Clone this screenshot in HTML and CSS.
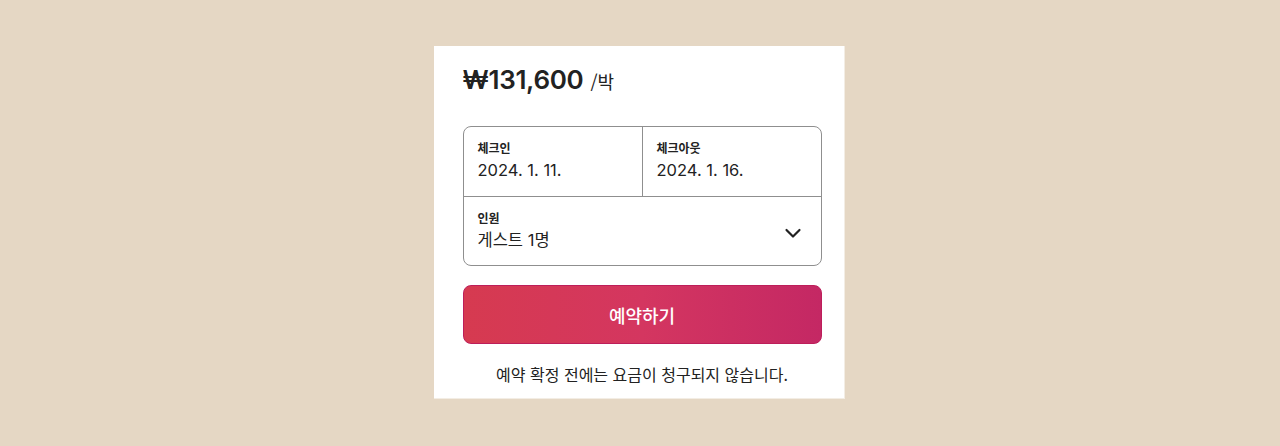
FILE: index.html
```html
<!DOCTYPE html>
<html lang="ko">
<head>
<meta charset="utf-8">
<title>예약</title>
<link rel="stylesheet" href="styles.css">
</head>
<body>
<div class="page">
  <div class="card">
    <div class="price">
      <span class="amount">₩131,600</span>
      <span class="unit">/박</span>
    </div>
    <div class="form">
      <div class="row dates">
        <div class="field">
          <div class="label">체크인</div>
          <div class="value">2024. 1. 11.</div>
        </div>
        <div class="field right">
          <div class="label">체크아웃</div>
          <div class="value">2024. 1. 16.</div>
        </div>
      </div>
      <div class="row guests">
        <div class="field">
          <div class="label">인원</div>
          <div class="value">게스트 1명</div>
        </div>
        <svg class="chev" width="18" height="18" viewBox="0 0 18 18" aria-hidden="true">
          <path d="M2.5 6 L9 12.5 L15.5 6" fill="none" stroke="#222" stroke-width="2.2" stroke-linecap="round" stroke-linejoin="round"/>
        </svg>
      </div>
    </div>
    <button class="reserve">예약하기</button>
    <p class="note">예약 확정 전에는 요금이 청구되지 않습니다.</p>
  </div>
</div>
</body>
</html>
```

FILE: styles.css
```css
* { box-sizing: border-box; }
html, body { margin: 0; padding: 0; }
body {
  background: #e5d7c4;
  font-family: Inter, "Noto Sans CJK KR", "Noto Sans", sans-serif;
  color: #222222;
  height: 446px;
}
.page {
  display: flex;
  justify-content: center;
  padding-top: 46px;
  padding-right: 2px;
}
.card {
  width: 411px;
  height: 353px;
  background: #ffffff;
  border-right: 1px solid #f3ede4;
  border-bottom: 1px solid #f3ede4;
  padding: 18px 22px 0 29px;
  display: flex;
  flex-direction: column;
}
.price {
  display: flex;
  align-items: baseline;
  gap: 7px;
  height: 34px;
}
.amount {
  font-size: 26px;
  font-weight: 600;
  letter-spacing: -0.3px;
  color: #222;
}
.unit {
  font-family: "Noto Sans CJK KR", sans-serif;
  font-size: 18px;
  font-weight: 400;
  color: #222;
}
.form {
  margin-top: 28px;
  border: 1px solid #8f8f8f;
  border-radius: 8px;
  display: flex;
  flex-direction: column;
}
.row { display: flex; height: 68px; }
.dates { border-bottom: 1px solid #8f8f8f; height: 70px; }
.dates .field { flex: 1; }
.field {
  padding: 12px 14px 0 14px;
}
.field.right { border-left: 1px solid #8f8f8f; }
.label {
  font-family: "Noto Sans CJK KR", sans-serif;
  font-size: 12px;
  font-weight: 700;
  line-height: 18px;
  color: #222;
}
.value {
  font-size: 16.5px;
  line-height: 24px;
  margin-top: 1px;
  color: #222;
  font-family: Inter, "Noto Sans CJK KR", sans-serif;
}
.guests { justify-content: space-between; align-items: center; }
.guests .field { align-self: stretch; }
.chev { margin-right: 19px; margin-top: 4px; }
.reserve {
  margin-top: 19px;
  height: 59px;
  width: 100%;
  border: 1px solid #bd1e5a;
  border-radius: 8px;
  background: linear-gradient(90deg, #d63a50 0%, #d43660 50%, #c42864 100%);
  color: #ffffff;
  font-family: "Noto Sans CJK KR", sans-serif;
  font-size: 18px;
  font-weight: 500;
  padding: 0;
}
.note {
  margin: 19px 0 0 0;
  text-align: center;
  font-family: "Noto Sans CJK KR", sans-serif;
  font-size: 16px;
  color: #222;
  line-height: 22px;
}
```
